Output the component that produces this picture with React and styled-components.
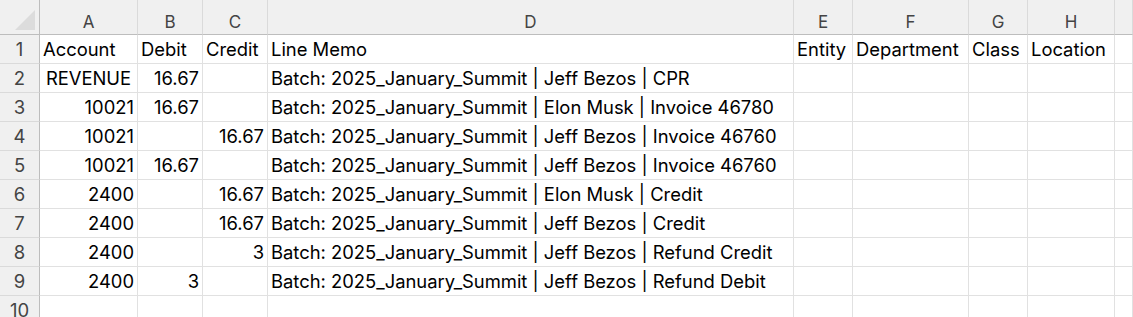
import React from "react";
import styled, { createGlobalStyle } from "styled-components";

const Global = createGlobalStyle`
  html, body { margin: 0; padding: 0; background: #ffffff; }
  body { font-family: Inter, "Noto Sans", "Liberation Sans", sans-serif; }
`;

const COLS = "40px 98px 65px 65px 526px 59px 116px 59px 87px 1fr";

const Sheet = styled.div`
  width: 1133px;
  height: 317px;
  overflow: hidden;
  background: #fff;
`;

const Row = styled.div`
  display: grid;
  grid-template-columns: ${COLS};
  height: ${(p) => (p.$head ? 35 : 29)}px;
`;

const Corner = styled.div`
  background: #f0f0f0;
  border-right: 1px solid #bdbdbd;
  border-bottom: 1px solid #bdbdbd;
  box-sizing: border-box;
  display: flex;
  align-items: flex-end;
  justify-content: flex-end;
  padding: 0 4px 4px 0;
`;

const Triangle = styled.svg`
  display: block;
`;

const ColHead = styled.div`
  background: #f0f0f0;
  border-right: 1px solid #dadada;
  border-bottom: 1px solid #bdbdbd;
  box-sizing: border-box;
  display: flex;
  align-items: center;
  justify-content: center;
  padding-top: 9px;
  font-size: 17px;
  color: #444;
`;

const RowHead = styled.div`
  background: #f0f0f0;
  border-right: 1px solid #bdbdbd;
  border-bottom: 1px solid #dadada;
  box-sizing: border-box;
  display: flex;
  align-items: center;
  justify-content: center;
  font-size: 18.5px;
  color: #444;
`;

const Cell = styled.div`
  border-right: 1px solid #e1e1e1;
  border-bottom: 1px solid #e1e1e1;
  box-sizing: border-box;
  display: flex;
  align-items: center;
  justify-content: ${(p) =>
    p.$align === "right" ? "flex-end" : p.$align === "center" ? "center" : "flex-start"};
  padding: 0 3px 0 3px;
  font-size: 18.4px;
  color: #000;
  white-space: nowrap;
  overflow: visible;
`;

const letters = ["A", "B", "C", "D", "E", "F", "G", "H", ""];

const memo = (rest) => `Batch: 2025_January_Summit | ${rest}`;

const rows = [
  [
    { t: "Account" },
    { t: "Debit" },
    { t: "Credit" },
    { t: "Line Memo" },
    { t: "Entity" },
    { t: "Department" },
    { t: "Class" },
    { t: "Location" },
  ],
  [{ t: "REVENUE", a: "center" }, { t: "16.67", a: "right" }, {}, { t: memo("Jeff Bezos | CPR") }],
  [{ t: "10021", a: "right" }, { t: "16.67", a: "right" }, {}, { t: memo("Elon Musk | Invoice 46780") }],
  [{ t: "10021", a: "right" }, {}, { t: "16.67", a: "right" }, { t: memo("Jeff Bezos | Invoice 46760") }],
  [{ t: "10021", a: "right" }, { t: "16.67", a: "right" }, {}, { t: memo("Jeff Bezos | Invoice 46760") }],
  [{ t: "2400", a: "right" }, {}, { t: "16.67", a: "right" }, { t: memo("Elon Musk | Credit") }],
  [{ t: "2400", a: "right" }, {}, { t: "16.67", a: "right" }, { t: memo("Jeff Bezos | Credit") }],
  [{ t: "2400", a: "right" }, {}, { t: "3", a: "right" }, { t: memo("Jeff Bezos | Refund Credit") }],
  [{ t: "2400", a: "right" }, { t: "3", a: "right" }, {}, { t: memo("Jeff Bezos | Refund Debit") }],
  [],
];

export default function App() {
  return (
    <>
      <Global />
      <Sheet>
        <Row $head>
          <Corner>
            <Triangle width="20" height="20" viewBox="0 0 20 20">
              <polygon points="0,20 20,0 20,20" fill="#dcdcdc" />
            </Triangle>
          </Corner>
          {letters.map((l, i) => (
            <ColHead key={i}>{l}</ColHead>
          ))}
        </Row>
        {rows.map((r, ri) => (
          <Row key={ri}>
            <RowHead>{ri + 1}</RowHead>
            {letters.map((_, ci) => {
              const c = r[ci] || {};
              return (
                <Cell key={ci} $align={c.a}>
                  {c.t || ""}
                </Cell>
              );
            })}
          </Row>
        ))}
      </Sheet>
    </>
  );
}
